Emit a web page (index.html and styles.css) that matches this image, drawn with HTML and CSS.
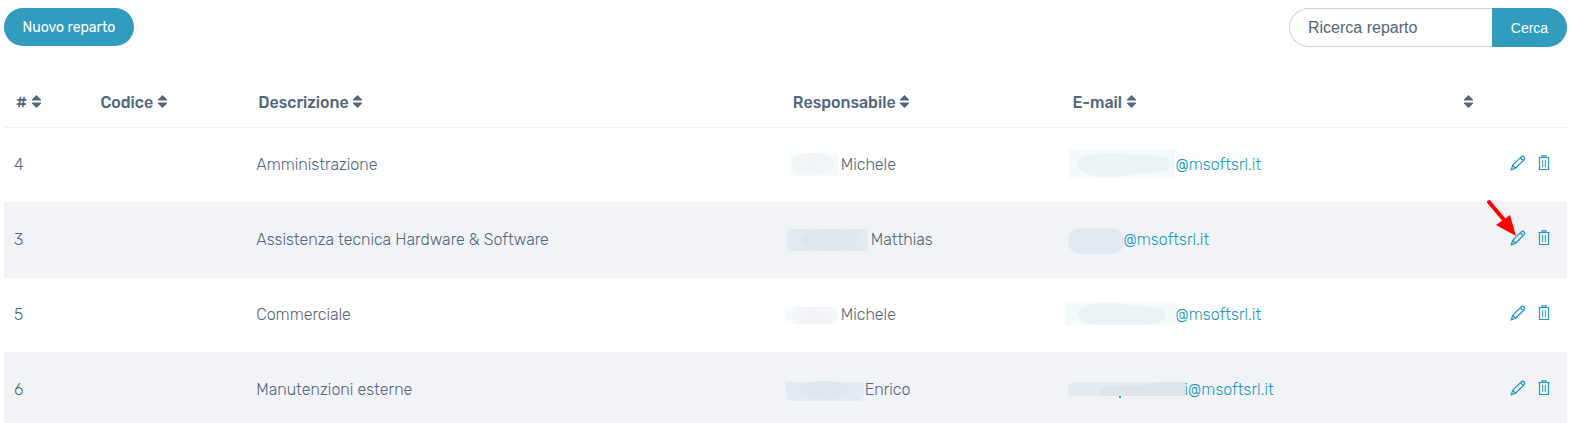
FILE: index.html
```html
<!DOCTYPE html>
<html lang="it">
  <head>
    <meta charset="UTF-8" />
    <meta name="viewport" content="width=device-width, initial-scale=1.0" />
    <title>Reparti</title>
    <link rel="stylesheet" href="styles.css">
  </head>
  <body>
    <!-- Shared icons -->
    <svg class="sprite" aria-hidden="true">
      <symbol id="sort" viewBox="0 0 11 13">
        <path d="M5.5 0 L10 4.4 Q10.3 5.5 9.4 5.5 H1.6 Q.7 5.5 1 4.4 Z M5.5 13 L10 8.6 Q10.3 7.5 9.4 7.5 H1.6 Q.7 7.5 1 8.6 Z" />
      </symbol>
      <symbol id="pencil" viewBox="0 0 16 16">
        <path d="M1.3 14.7 L2.7 10.4 L11 2.1 Q12.6.6 14.1 1.9 Q15.4 3.4 13.9 5 L5.6 13.3 Z M2.7 10.4 L5.6 13.3 M10.4 2.7 L13.3 5.6" stroke-width="1.3" />
      </symbol>
      <symbol id="trash" viewBox="0 0 12 16">
        <path d="M.5 2.5 H11.5 M4 2 V.8 H8 V2 M1.5 3 V14.5 H10.5 V3" stroke-width="1.2" />
        <path d="M4.5 5 V12 M7.5 5 V12" opacity=".8" />
        <path d="M6 5 V12" opacity=".3" />
      </symbol>
    </svg>

    <header class="toolbar">
      <button type="button" class="btn btn-new">Nuovo reparto</button>
      <form class="search">
        <input type="search" class="search-input" placeholder="Ricerca reparto" aria-label="Ricerca reparto" />
        <button type="submit" class="btn btn-search">Cerca</button>
      </form>
    </header>

    <table class="table">
      <colgroup>
        <col class="col-id" />
        <col class="col-code" />
        <col class="col-desc" />
        <col class="col-manager" />
        <col class="col-email" />
        <col class="col-actions" />
      </colgroup>
      <thead>
        <tr>
          <th># <svg class="sort"><use href="#sort" /></svg></th>
          <th>Codice <svg class="sort"><use href="#sort" /></svg></th>
          <th>Descrizione <svg class="sort"><use href="#sort" /></svg></th>
          <th>Responsabile <svg class="sort"><use href="#sort" /></svg></th>
          <th>E-mail <svg class="sort"><use href="#sort" /></svg></th>
          <th><svg class="sort"><use href="#sort" /></svg></th>
        </tr>
      </thead>
      <tbody>
        <tr>
          <td>4</td>
          <td></td>
          <td>Amministrazione</td>
          <td class="masked">
            <div class="entry">
              <svg class="mask" width="56" height="32">
                <rect x="5" y="4" width="49" height="23" fill="#f5fafa" />
                <ellipse cx="28" cy="15" rx="21" ry="11" fill="#f3f4f8" />
                <ellipse cx="28" cy="15" rx="6" ry="3" fill="#f6f1f3" />
              </svg>
              <span>Michele</span>
            </div>
          </td>
          <td class="masked">
            <div class="entry">
              <svg class="mask" width="111" height="32">
                <rect x="4" y="0" width="106" height="29" fill="#f4f9fa" />
                <path d="M12 15 C13 8 26 4 44 4 C60 4 64 6 82 6 C100 7 109 10 110 15 C109 20 98 24 82 24 C66 25 60 28 44 28 C26 28 13 23 12 15 Z" fill="#ecf3f7" />
              </svg>
              <a href="#">@msoftsrl.it</a>
            </div>
          </td>
          <td>
            <div class="actions">
              <a href="#" aria-label="Modifica"><svg class="icon-pencil"><use href="#pencil" /></svg></a>
              <a href="#" aria-label="Elimina"><svg class="icon-trash"><use href="#trash" /></svg></a>
            </div>
          </td>
        </tr>
        <tr>
          <td>3</td>
          <td></td>
          <td>Assistenza tecnica Hardware &amp; Software</td>
          <td class="masked">
            <div class="entry">
              <svg class="mask" width="86" height="32">
                <rect x="0" y="5" width="83" height="22" fill="#ebf1f5" />
                <path d="M6 5 H83 V27 H6 Q-2 16 6 5 Z" fill="#e4ebf0" />
                <ellipse cx="45" cy="16" rx="29" ry="11" fill="#dfe6ec" />
              </svg>
              <span>Matthias</span>
            </div>
          </td>
          <td class="masked">
            <div class="entry">
              <svg class="mask" width="59" height="32">
                <rect x="3" y="4" width="56" height="26" fill="#edf3f7" />
                <rect x="3" y="4" width="56" height="26" rx="13" fill="#e2e9ef" />
              </svg>
              <a href="#">@msoftsrl.it</a>
            </div>
          </td>
          <td>
            <div class="actions">
              <a href="#" aria-label="Modifica"><svg class="icon-pencil"><use href="#pencil" /></svg></a>
              <a href="#" aria-label="Elimina"><svg class="icon-trash"><use href="#trash" /></svg></a>
              <!-- Red arrow that points at the edit link -->
              <svg class="pointer" viewBox="0 0 32 40" aria-hidden="true">
                <path d="M4 4 L20 23" stroke="#f00" stroke-width="4" stroke-linecap="round" />
                <path d="M11 27 L25 17 L31 38 Z" fill="#f00" />
              </svg>
            </div>
          </td>
        </tr>
        <tr>
          <td>5</td>
          <td></td>
          <td>Commerciale</td>
          <td class="masked">
            <div class="entry">
              <svg class="mask" width="56" height="32">
                <rect x="0" y="8" width="53" height="17" fill="#f5fafa" />
                <path d="M12 8 H45 Q56 16 45 25 H12 Q2 16 12 8 Z" fill="#f3f4f8" />
                <ellipse cx="28" cy="15" rx="7" ry="4" fill="#f6f1f3" />
              </svg>
              <span>Michele</span>
            </div>
          </td>
          <td class="masked">
            <div class="entry">
              <svg class="mask" width="111" height="32">
                <rect x="0" y="3" width="111" height="23" fill="#f4f9fa" />
                <path d="M12 15 C13 8 24 4 40 4 C56 4 60 7 76 7 C92 7 101 10 101 15 C101 20 94 26 76 26 H36 C20 26 13 21 12 15 Z" fill="#ecf3f7" />
              </svg>
              <a href="#">@msoftsrl.it</a>
            </div>
          </td>
          <td>
            <div class="actions">
              <a href="#" aria-label="Modifica"><svg class="icon-pencil"><use href="#pencil" /></svg></a>
              <a href="#" aria-label="Elimina"><svg class="icon-trash"><use href="#trash" /></svg></a>
            </div>
          </td>
        </tr>
        <tr>
          <td>6</td>
          <td></td>
          <td>Manutenzioni esterne</td>
          <td class="masked">
            <div class="entry">
              <svg class="mask" width="80" height="32">
                <rect x="0" y="8" width="79" height="19" fill="#ebf1f5" />
                <path d="M2 8 H79 V22 L75 27 H6 Q1 24 1 20 V8 Z" fill="#e4ebf0" />
                <ellipse cx="40" cy="16" rx="25" ry="9" fill="#dfe6ec" />
              </svg>
              <span>Enrico</span>
            </div>
          </td>
          <td class="masked">
            <div class="entry">
              <svg class="mask" width="120" height="32">
                <path d="M3 22 V12 L8 8 H120 V22 Z" fill="#e4ebf0" />
                <path d="M36 13 L72 12 Q96 8 108 8 H120 V22 H36 Z" fill="#dee5ea" />
                <rect x="54" y="22" width="2" height="2" fill="#329cbf" />
              </svg>
              <a href="#">i@msoftsrl.it</a>
            </div>
          </td>
          <td>
            <div class="actions">
              <a href="#" aria-label="Modifica"><svg class="icon-pencil"><use href="#pencil" /></svg></a>
              <a href="#" aria-label="Elimina"><svg class="icon-trash"><use href="#trash" /></svg></a>
            </div>
          </td>
        </tr>
      </tbody>
    </table>
  </body>
</html>
```

FILE: styles.css
```css
* {
  box-sizing: border-box;
}

html {
  overflow: hidden;
}

body {
  margin: 0;
  padding: 8px 4px 0;
  background: #fff;
  color: #54667a;
  font-family: Rubik, Roboto, sans-serif;
  font-size: 16px;
  font-weight: 300;
}

a {
  color: #2199be;
  text-decoration: none;
}

.sprite {
  display: none;
}

.toolbar {
  display: flex;
  justify-content: space-between;
  align-items: flex-start;
  margin-bottom: 29px;
}

.btn {
  padding: 0 18px;
  border: 0;
  background: #329cbf;
  color: #fff;
  font-size: 14px;
  cursor: pointer;
}

.btn-new {
  height: 38px;
  min-width: 130px;
  border-radius: 19px;
  font-family: Rubik, Roboto, sans-serif;
  font-weight: 400;
}

.search {
  display: flex;
  height: 39px;
}

.search-input {
  width: 203px;
  padding: 0 18px;
  border: 1px solid #ced4da;
  border-right: 0;
  border-radius: 20px 0 0 20px;
  background: #fff;
  color: #54667a;
  font-family: "Liberation Sans", Arial, sans-serif;
  font-size: 16px;
  appearance: none;
}

.search-input::placeholder {
  color: #54667a;
  opacity: 1;
}

.btn-search {
  min-width: 75px;
  border-radius: 0 20px 20px 0;
  font-family: "Liberation Sans", Arial, sans-serif;
}

.table {
  width: 100%;
  border-collapse: separate;
  border-spacing: 0;
  table-layout: fixed;
}

.col-id {
  width: 5.4%;
}

.col-code {
  width: 10.1%;
}

.col-desc {
  width: 34.2%;
}

.col-manager {
  width: 17.9%;
}

.col-email {
  width: 25%;
}

.table th {
  height: 51px;
  padding: 2px 12px 0;
  font-weight: 500;
  text-align: left;
  white-space: nowrap;
}

.table td {
  height: 75px;
  padding: 0 10px 2px;
  border-top: 1px solid #f1f3f7;
}

.table .masked {
  padding: 0 4px 2px;
}

.table tbody tr:nth-child(even) {
  background: #f1f3f7;
}

.sort {
  width: 11px;
  height: 13px;
  vertical-align: 0;
  fill: #54667a;
}

.entry {
  display: flex;
  align-items: center;
  height: 32px;
  white-space: nowrap;
}

.mask {
  flex: none;
  margin-top: 2px;
}

.actions {
  position: relative;
  display: flex;
  justify-content: flex-end;
  gap: 12px;
  padding-right: 7px;
  padding-bottom: 2px;
}

.actions a {
  display: flex;
}

.icon-pencil,
.icon-trash {
  height: 16px;
  fill: none;
  stroke: #2199be;
}

.icon-pencil {
  width: 16px;
}

.icon-trash {
  width: 12px;
}

.pointer {
  position: absolute;
  right: 40px;
  bottom: 10px;
  width: 32px;
  height: 40px;
  fill: none;
}
```
